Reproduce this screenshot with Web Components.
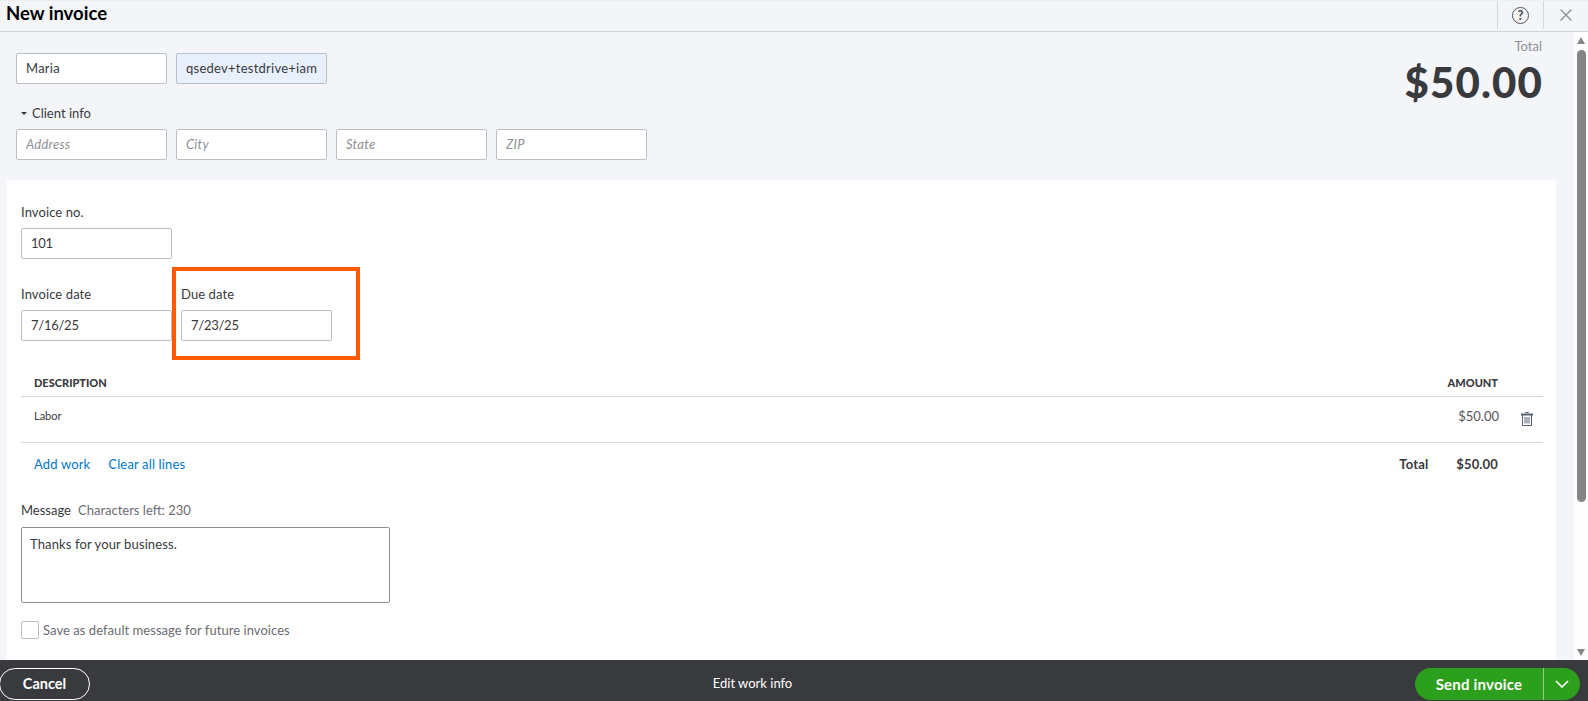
<!DOCTYPE html>
<html lang="en">
<head>
<meta charset="utf-8">
<title>New invoice</title>
<style>
  html, body { margin: 0; height: 100%; overflow: hidden; background: #f4f5f8; }
  body { font-family: Lato, "Open Sans", sans-serif; color: #393a3d; }
</style>
</head>
<body>
<invoice-app>
  <invoice-header slot="header">New invoice</invoice-header>
  <invoice-top slot="top"></invoice-top>
  <invoice-card slot="card"></invoice-card>
  <fake-scrollbar slot="scrollbar"></fake-scrollbar>
  <invoice-footer slot="footer"></invoice-footer>
</invoice-app>

<script>
class InvoiceApp extends HTMLElement {
  constructor() {
    super();
    this.attachShadow({ mode: 'open' });
  }
  connectedCallback() {
    this.shadowRoot.innerHTML = `
      <style>
        :host { display: flex; flex-direction: column; height: 100vh; overflow: hidden; }
        .middle { flex: 1; display: flex; min-height: 0; }
        .scroll { flex: 1; min-width: 0; overflow: hidden; padding: 0 18px 0 7px; }
      </style>
      <slot name="header"></slot>
      <div class="middle">
        <div class="scroll">
          <slot name="top"></slot>
          <slot name="card"></slot>
        </div>
        <slot name="scrollbar"></slot>
      </div>
      <slot name="footer"></slot>
    `;
  }
}

class InvoiceHeader extends HTMLElement {
  constructor() {
    super();
    this.attachShadow({ mode: 'open' });
  }
  connectedCallback() {
    this.shadowRoot.innerHTML = `
      <style>
        :host { display: flex; height: 30px; border-top: 1px solid #eceef1; border-bottom: 1px solid #d4d7dc; background: #f4f5f8; }
        h1 { flex: 1; margin: 0; padding: 0 0 0 6px; font-size: 18.5px; line-height: 24px; font-weight: 700; color: #000; }
        .btn { display: flex; align-items: center; justify-content: center; height: 28px; border-left: 1px solid #d4d7dc; }
        .help { width: 45px; }
        .close { width: 44px; }
        .ring { width: 15px; height: 15px; border: 1.5px solid #54555a; border-radius: 50%; display: flex; align-items: center; justify-content: center; font-size: 13px; font-weight: 900; color: #54555a; line-height: 1; }
        svg { display: block; }
      </style>
      <h1><slot></slot></h1>
      <div class="btn help"><span class="ring">?</span></div>
      <div class="btn close">
        <svg width="14" height="14" viewBox="0 0 14 14"><path d="M1.5 1.5l11 11M12.5 1.5l-11 11" stroke="#8d9096" stroke-width="1.4" fill="none"/></svg>
      </div>
    `;
  }
}

class TextField extends HTMLElement {
  constructor() {
    super();
    this.attachShadow({ mode: 'open' });
  }
  connectedCallback() {
    this.shadowRoot.innerHTML = `
      <style>
        :host { display: block; width: 151px; font-size: 13px; letter-spacing: .25px; }
        label { display: block; height: 20px; line-height: 20px; margin-bottom: 6px; font-size: 13px; letter-spacing: .1px; color: #393a3d; }
        .box { box-sizing: border-box; height: 31px; line-height: 29px; padding: 0 9px; background: #fff; border: 1px solid #babec5; border-radius: 2px; color: #393a3d; }
        .clip { display: block; overflow: hidden; white-space: nowrap; }
        :host([filled]) .box { background: #e8f0fe; }
        :host([placeholder]) .box { font-style: italic; color: #8d9096; }
      </style>
      ${this.hasAttribute('label') ? `<label>${this.getAttribute('label')}</label>` : ''}
      <div class="box"><span class="clip"><slot></slot></span></div>
    `;
  }
}

class InvoiceTop extends HTMLElement {
  constructor() {
    super();
    this.attachShadow({ mode: 'open' });
  }
  connectedCallback() {
    this.shadowRoot.innerHTML = `
      <style>
        :host { display: flex; justify-content: space-between; height: 148px; padding-left: 9px; padding-right: 14px; }
        .left { padding-top: 21px; }
        .row { display: flex; gap: 9px; }
        .toggle { display: flex; align-items: center; gap: 5px; height: 20px; margin: 19px 0 6px 5px; font-size: 13px; }
        .caret { width: 0; height: 0; border: 3px solid transparent; border-top: 3px solid #393a3d; margin-top: 3px; }
        .total { text-align: right; padding-top: 6px; }
        .cap { font-size: 13px; line-height: 16px; color: #8d9096; }
        .amount { font-size: 42px; line-height: 56px; font-weight: 900; letter-spacing: 1.1px; margin-right: -1px; color: #393a3d; }
      </style>
      <div class="left">
        <div class="row">
          <text-field>Maria</text-field>
          <text-field filled>qsedev+testdrive+iamqsedev</text-field>
        </div>
        <div class="toggle"><span class="caret"></span>Client info</div>
        <div class="row">
          <text-field placeholder>Address</text-field>
          <text-field placeholder>City</text-field>
          <text-field placeholder>State</text-field>
          <text-field placeholder>ZIP</text-field>
        </div>
      </div>
      <div class="total">
        <div class="cap">Total</div>
        <div class="amount">$50.00</div>
      </div>
    `;
  }
}

class InvoiceCard extends HTMLElement {
  constructor() {
    super();
    this.attachShadow({ mode: 'open' });
  }
  connectedCallback() {
    this.shadowRoot.innerHTML = `
      <style>
        :host { display: block; background: #fff; padding: 22px 13px 40px 14px; font-size: 13px; height: 480px; box-sizing: border-box; }
        text-field.num { letter-spacing: -.25px; }
        .dates { display: flex; gap: 9px; margin-top: 25px; position: relative; }
        .callout { position: absolute; left: 151px; top: -17px; width: 188px; height: 93px; box-sizing: border-box; border: 4px solid #ff5a00; pointer-events: none; }
        invoice-lines { margin-top: 27px; }
        .msg-head { display: flex; gap: 7px; height: 20px; line-height: 20px; margin: 13px 0 7px; }
        .msg-head span { color: #6b6c72; }
        .msg { box-sizing: border-box; width: 369px; height: 76px; border: 1px solid #8d9096; border-radius: 2px; padding: 7px 8px; font-size: 13px; line-height: 18px; letter-spacing: .12px; }
        .save { display: flex; align-items: center; gap: 4px; margin-top: 18px; height: 18px; color: #6b6c72; letter-spacing: .05px; }
        .check { box-sizing: border-box; width: 18px; height: 18px; border: 1px solid #babec5; border-radius: 2px; background: #fff; }
      </style>
      <text-field class="num" label="Invoice no.">101</text-field>
      <div class="dates">
        <text-field class="num" label="Invoice date">7/16/25</text-field>
        <text-field class="num" label="Due date">7/23/25</text-field>
        <div class="callout"></div>
      </div>
      <invoice-lines></invoice-lines>
      <div class="msg-head">Message <span>Characters left: 230</span></div>
      <div class="msg">Thanks for your business.</div>
      <div class="save"><div class="check"></div>Save as default message for future invoices</div>
    `;
  }
}

class InvoiceLines extends HTMLElement {
  constructor() {
    super();
    this.attachShadow({ mode: 'open' });
  }
  connectedCallback() {
    this.shadowRoot.innerHTML = `
      <style>
        :host { display: block; font-size: 13px; }
        .head, .line, .foot { display: flex; align-items: center; padding: 0 45px 0 13px; }
        .head { height: 28px; border-bottom: 1px solid #d4d7dc; font-size: 11px; font-weight: 900; }
        .line { height: 45px; border-bottom: 1px solid #d4d7dc; position: relative; padding-right: 44px; }
        .line .desc { font-size: 11px; margin-top: -8px; }
        .line .price { color: #54555a; margin-top: -7px; }
        .grow { flex: 1; }
        .trash { position: absolute; right: 10px; top: 15px; display: block; }
        .foot { height: 42px; padding-bottom: 2px; letter-spacing: .15px; }
        a { color: #0077c5; text-decoration: none; margin-right: 18px; }
        .sum { font-weight: 700; }
        .sum.t { margin-right: 28px; }
      </style>
      <div class="head"><span class="grow">DESCRIPTION</span><span>AMOUNT</span></div>
      <div class="line">
        <span class="desc grow">Labor</span>
        <span class="price">$50.00</span>
        <svg class="trash" width="12" height="14" viewBox="0 0 12 14" fill="none" stroke="#54606e" stroke-width="1"><path d="M0 2.5h12" stroke-width="2"/><path d="M4.5 1V.5h3V1M1.5 3v10.5h9V3M4 5v6.5M6 5v6.5M8 5v6.5"/></svg>
      </div>
      <div class="foot">
        <a href="#">Add work</a><a href="#">Clear all lines</a>
        <span class="grow"></span>
        <span class="sum t">Total</span><span class="sum">$50.00</span>
      </div>
    `;
  }
}

class FakeScrollbar extends HTMLElement {
  constructor() {
    super();
    this.attachShadow({ mode: 'open' });
  }
  connectedCallback() {
    this.shadowRoot.innerHTML = `
      <style>
        :host { display: flex; flex-direction: column; align-items: center; width: 14px; flex: none; padding-top: 5px; box-sizing: border-box; background: #fdfdfd; }
        .up, .down { width: 0; height: 0; border-left: 4.5px solid transparent; border-right: 4.5px solid transparent; }
        .up { border-bottom: 7px solid #858585; }
        .thumb { width: 9px; height: 452px; margin-top: 6px; background: #858585; border-radius: 5px; }
        .down { border-top: 7px solid #858585; margin-top: auto; margin-bottom: 4px; }
      </style>
      <div class="up"></div>
      <div class="thumb"></div>
      <div class="down"></div>
    `;
  }
}

class InvoiceFooter extends HTMLElement {
  constructor() {
    super();
    this.attachShadow({ mode: 'open' });
  }
  connectedCallback() {
    this.shadowRoot.innerHTML = `
      <style>
        :host { display: flex; align-items: flex-start; height: 41px; flex: none; background: #393a3d; color: #fff; padding: 8px 8px 0 0; box-sizing: border-box; font-size: 13px; }
        .cancel { box-sizing: border-box; width: 91px; height: 32px; margin-left: -1px; line-height: 30px; text-align: center; border: 1px solid #fff; border-radius: 16px; font-size: 14.5px; font-weight: 700; }
        .center { flex: 1; text-align: center; line-height: 30px; }
        .send { display: flex; height: 32px; width: 165px; border-radius: 16px; background: #2ca01c; font-size: 15px; letter-spacing: .2px; font-weight: 700; line-height: 32px; overflow: hidden; }
        .label { flex: 1; text-align: center; border-right: 1px solid #8fd083; }
        .more { width: 36px; display: flex; align-items: center; justify-content: center; }
      </style>
      <div class="cancel">Cancel</div>
      <div class="center">Edit work info</div>
      <div class="send">
        <span class="label">Send invoice</span>
        <span class="more"><svg width="14" height="8" viewBox="0 0 14 8" fill="none" stroke="#fff" stroke-width="1.6"><path d="M1 1l6 6 6-6"/></svg></span>
      </div>
    `;
  }
}

customElements.define('invoice-app', InvoiceApp);
customElements.define('invoice-header', InvoiceHeader);
customElements.define('text-field', TextField);
customElements.define('invoice-top', InvoiceTop);
customElements.define('invoice-lines', InvoiceLines);
customElements.define('invoice-card', InvoiceCard);
customElements.define('fake-scrollbar', FakeScrollbar);
customElements.define('invoice-footer', InvoiceFooter);
</script>
</body>
</html>
